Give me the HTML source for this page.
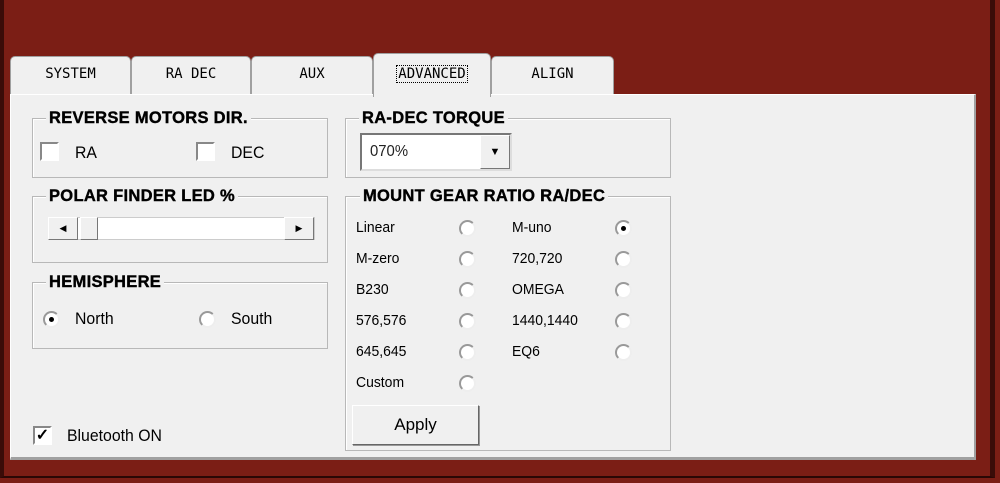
<!DOCTYPE html>
<html><head><style>
body{margin:0;width:1000px;height:483px;background:#7b1e15;position:relative;overflow:hidden;font-family:"Liberation Sans",sans-serif;color:#000}
.frame{position:absolute;left:0;top:0;width:995px;height:478px;border-left:4px solid #3a0c08;border-right:5px solid #3a0c08;border-bottom:2px solid #2a0805;box-sizing:border-box}
.tab{position:absolute;top:56px;height:40px;background:#f0f0f0;border:1px solid #a0a0a0;border-bottom:none;border-radius:5px 5px 0 0;box-sizing:border-box;font-family:"DejaVu Sans Mono","Liberation Mono",monospace;font-size:14px;text-align:center;line-height:34px}
.panel{position:absolute;left:10px;top:94px;width:966px;height:366px;background:#f0f0f0;border:1px solid #fff;border-right:2px solid #a0a0a0;border-bottom:3px solid #a0a0a0;box-sizing:border-box}
.grp{position:absolute;border:1px solid #b8b8b8;box-shadow:1px 1px 0 #fff inset;box-sizing:border-box}
.gt{position:absolute;background:#f0f0f0;font-weight:bold;font-size:16.5px;padding:0 3px;top:-10px;left:13px;white-space:nowrap;letter-spacing:.3px;-webkit-text-stroke:.4px #000}
.t{position:absolute;font-size:17px;white-space:nowrap;transform:scaleX(.93);transform-origin:left}
.s{position:absolute;font-size:15px;white-space:nowrap;transform:scaleX(.93);transform-origin:left}
.cb{position:absolute;width:19px;height:19px;background:#fff;border:2px solid;border-color:#888 #fff #fff #888;box-sizing:border-box}
.rd{position:absolute;width:17px;height:17px;border-radius:50%;background:#fff;border:2px solid;border-color:#999 #eee #eee #999;box-sizing:border-box}
.dot{position:absolute;left:4px;top:4px;width:5px;height:5px;border-radius:50%;background:#000}
</style></head><body>
<div class="frame"></div>
<div class="tab" style="left:10px;width:121px">SYSTEM</div>
<div class="tab" style="left:131px;width:120px">RA DEC</div>
<div class="tab" style="left:251px;width:122px">AUX</div>
<div class="tab" style="left:491px;width:123px">ALIGN</div>
<div class="panel"></div>
<div class="tab" style="left:373px;top:53px;width:118px;height:44px;line-height:40px;border-bottom:none"><span style="border:1px dotted #000;padding:0 1px">ADVANCED</span></div>

<div class="grp" style="left:32px;top:118px;width:296px;height:60px"><div class="gt">REVERSE MOTORS DIR.</div></div>
<div class="cb" style="left:40px;top:142px"></div><div class="t" style="left:75px;top:143px">RA</div>
<div class="cb" style="left:196px;top:142px"></div><div class="t" style="left:231px;top:143px">DEC</div>

<div class="grp" style="left:32px;top:196px;width:296px;height:67px"><div class="gt">POLAR FINDER LED %</div></div>
<div style="position:absolute;left:48px;top:217px;width:267px;height:23px;background:#fff;border:1px solid #ccc;box-sizing:border-box"></div>
<div style="position:absolute;left:48px;top:217px;width:30px;height:23px;background:#f0f0f0;border:1px solid;border-color:#fff #777 #777 #fff;box-sizing:border-box;font-size:9px;text-align:center;line-height:21px">◀</div>
<div style="position:absolute;left:80px;top:217px;width:18px;height:23px;background:#f0f0f0;border:1px solid;border-color:#fff #777 #777 #fff;box-sizing:border-box"></div>
<div style="position:absolute;left:284px;top:217px;width:30px;height:23px;background:#f0f0f0;border:1px solid;border-color:#fff #777 #777 #fff;box-sizing:border-box;font-size:9px;text-align:center;line-height:21px">▶</div>

<div class="grp" style="left:32px;top:282px;width:296px;height:67px"><div class="gt">HEMISPHERE</div></div>
<div class="rd" style="left:43px;top:311px"><div class="dot"></div></div><div class="t" style="left:75px;top:309px">North</div>
<div class="rd" style="left:199px;top:311px"></div><div class="t" style="left:231px;top:309px">South</div>

<div class="cb" style="left:33px;top:426px;font-size:16px;line-height:15px;text-align:center;font-weight:bold">✓</div>
<div class="t" style="left:67px;top:426px">Bluetooth ON</div>

<div class="grp" style="left:345px;top:118px;width:326px;height:60px"><div class="gt">RA-DEC TORQUE</div></div>
<div style="position:absolute;left:360px;top:133px;width:152px;height:38px;background:#fff;border:2px solid;border-color:#777 #ddd #ddd #777;box-sizing:border-box"></div>
<div class="t" style="left:370px;top:143px;font-size:16px;color:#222">070%</div>
<div style="position:absolute;left:480px;top:135px;width:30px;height:34px;background:#f0f0f0;border:1px solid;border-color:#fff #777 #777 #fff;box-sizing:border-box;font-size:11px;text-align:center;line-height:32px">▼</div>

<div class="grp" style="left:345px;top:196px;width:326px;height:255px"><div class="gt" style="left:14px">MOUNT GEAR RATIO RA/DEC</div></div>
<div class="s" style="left:356px;top:219px">Linear</div><div class="rd" style="left:459px;top:220px"></div>
<div class="s" style="left:356px;top:250px">M-zero</div><div class="rd" style="left:459px;top:251px"></div>
<div class="s" style="left:356px;top:281px">B230</div><div class="rd" style="left:459px;top:282px"></div>
<div class="s" style="left:356px;top:312px">576,576</div><div class="rd" style="left:459px;top:313px"></div>
<div class="s" style="left:356px;top:343px">645,645</div><div class="rd" style="left:459px;top:344px"></div>
<div class="s" style="left:356px;top:374px">Custom</div><div class="rd" style="left:459px;top:375px"></div>
<div class="s" style="left:512px;top:219px">M-uno</div><div class="rd" style="left:615px;top:220px"><div class="dot"></div></div>
<div class="s" style="left:512px;top:250px">720,720</div><div class="rd" style="left:615px;top:251px"></div>
<div class="s" style="left:512px;top:281px">OMEGA</div><div class="rd" style="left:615px;top:282px"></div>
<div class="s" style="left:512px;top:312px">1440,1440</div><div class="rd" style="left:615px;top:313px"></div>
<div class="s" style="left:512px;top:343px">EQ6</div><div class="rd" style="left:615px;top:344px"></div>
<div style="position:absolute;left:352px;top:405px;width:127px;height:40px;background:#f0f0f0;border:1px solid;border-color:#fff #666 #666 #fff;box-shadow:1px 1px 0 #999;box-sizing:border-box;font-size:17px;text-align:center;line-height:38px">Apply</div>
</body></html>
